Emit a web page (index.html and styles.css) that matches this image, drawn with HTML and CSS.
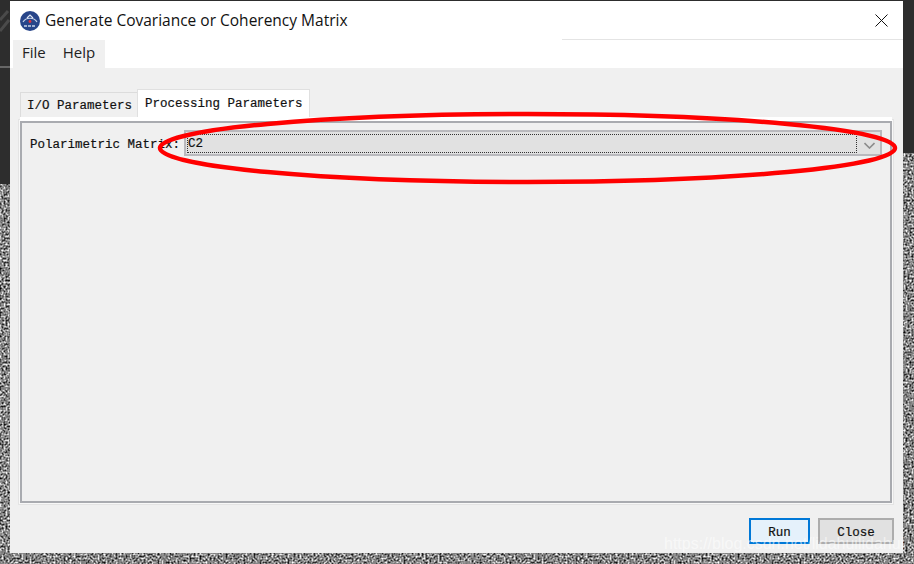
FILE: index.html
```html
<!DOCTYPE html>
<html lang="en">
<head>
<meta charset="utf-8">
<title>Generate Covariance or Coherency Matrix</title>
<link rel="stylesheet" href="styles.css">
</head>
<body>
<svg class="noise" width="914" height="564" aria-hidden="true">
  <filter id="grain" x="0" y="0" width="100%" height="100%" color-interpolation-filters="sRGB">
    <feTurbulence type="fractalNoise" baseFrequency="0.5" numOctaves="2" seed="4"/>
    <feColorMatrix type="matrix" values="1.7 0 0 0 -0.33  1.7 0 0 0 -0.33  1.7 0 0 0 -0.33  0 0 0 0 1"/>
  </filter>
  <rect width="914" height="564" filter="url(#grain)"/>
</svg>
<div class="dark"></div>
<div class="dark-left"></div>
<svg class="dark-marks" width="10" height="70" viewBox="0 0 10 70" aria-hidden="true">
  <path d="M0 20 L8 11 M0 31 L9 20" stroke="#4a4a4a" stroke-width="3" fill="none"/>
  <path d="M0 67 H10" stroke="#666" stroke-width="2" fill="none"/>
</svg>
<main class="window">
  <header class="titlebar">
    <svg class="app-icon" width="20" height="20" viewBox="0 0 20 20" aria-hidden="true">
      <circle cx="10" cy="10" r="10" fill="#27458a"/>
      <path d="M3 11 C6 6 14 6 17 11" fill="none" stroke="#c9d4ea" stroke-width="1.2"/>
      <path d="M7 7 L10 4 L13 7" fill="none" stroke="#dfe6f3" stroke-width="1.2"/>
      <circle cx="10" cy="10.5" r="1.4" fill="#e0323c"/>
      <path d="M4 15 H16" stroke="#c9d4ea" stroke-width="1.6" stroke-dasharray="3 1"/>
    </svg>
    <h1 class="title">Generate Covariance or Coherency Matrix</h1>
    <svg class="close-x" width="13" height="13" viewBox="0 0 13 13" aria-hidden="true">
      <path d="M.5 .5 L12.5 12.5 M12.5 .5 L.5 12.5" stroke="#111" stroke-width="1" fill="none"/>
    </svg>
  </header>
  <div class="menubar-row">
    <nav class="menubar"><span>File</span><span>Help</span></nav>
  </div>
  <div class="content">
    <div class="tabs">
      <div class="tab">I/O Parameters</div>
      <div class="tab active">Processing Parameters</div>
    </div>
    <section class="panel">
      <div class="field">
        <label class="field-label">Polarimetric Matrix:</label>
        <div class="combo">
          <div class="combo-value">C2</div>
          <svg class="chevron" width="11" height="7" viewBox="0 0 11 7" aria-hidden="true">
            <path d="M.5 1 L5.5 6 L10.5 1" fill="none" stroke="#8c8c8c" stroke-width="1.6"/>
          </svg>
        </div>
      </div>
    </section>
    <footer class="actions">
      <button class="btn primary">Run</button>
      <button class="btn">Close</button>
    </footer>
  </div>
</main>
<svg class="annotation" width="914" height="564" viewBox="0 0 914 564" aria-hidden="true">
  <ellipse cx="527.5" cy="148" rx="367.5" ry="34" fill="none" stroke="#f00" stroke-width="4.5"/>
</svg>
<div class="watermark">https://blog.csdn.net/lidahuilidahui</div>
</body>
</html>
```
FILE: styles.css
```css
* { box-sizing: border-box; }
html, body { margin: 0; padding: 0; }
body {
  width: 914px;
  height: 564px;
  position: relative;
  overflow: hidden;
  background: #777;
  font-family: "Liberation Mono", monospace;
  color: #111;
}
.noise { position: absolute; left: 0; top: 0; }
.dark { position: absolute; left: 0; top: 0; width: 914px; height: 153px; background: #2d2d2d; }
.dark-left { position: absolute; left: 0; top: 0; width: 10px; height: 184px; background: #2d2d2d; }
.dark-marks { position: absolute; left: 0; top: 0; }
.window {
  position: absolute;
  left: 10px;
  top: 1px;
  width: 893px;
  height: 552px;
  display: flex;
  flex-direction: column;
  background: #f0f0f0;
}
.titlebar {
  height: 39px;
  flex: none;
  display: flex;
  align-items: center;
  padding: 0 15px 0 10px;
  background: #fff;
}
.app-icon { flex: none; }
.title {
  margin: 0 0 2px 5px;
  flex: 1;
  font: 400 15.5px "Open Sans", "Noto Sans", sans-serif;
  color: #111;
}
.close-x { flex: none; }
.menubar-row {
  height: 28px;
  flex: none;
  background: #fff;
  display: flex;
  position: relative;
}
.menubar-row::after {
  content: "";
  position: absolute;
  left: 552px;
  right: 0;
  top: -1px;
  height: 1px;
  background: #e4e4e4;
}
.menubar {
  margin-left: 3px;
  width: 92px;
  display: flex;
  gap: 17px;
  padding: 2px 0 0 9px;
  background: #f0f0f0;
  font: 400 15px "Open Sans", "Noto Sans", sans-serif;
  color: #222;
}
.content {
  flex: 1;
  display: flex;
  flex-direction: column;
  padding: 21px 11px 9px 10px;
  min-height: 0;
}
.tabs { display: flex; height: 28px; flex: none; align-items: flex-end; }
.tab {
  width: 118px;
  height: 25px;
  padding: 6px 0 0 6px;
  font-size: 12.5px;
  line-height: 14px;
  -webkit-text-stroke: .2px #111;
  background: #f0f0f0;
  border: 1px solid #dcdcdc;
  border-bottom: 0;
  white-space: nowrap;
}
.tab.active {
  height: 28px;
  padding: 7px 0 0 7px;
  width: 173px;
  background: #fff;
  margin-left: -1px;
  border-color: #e0e0e0;
}
.panel {
  flex: 1;
  border: 2px solid #a9abb0;
  box-shadow: 0 -4px 0 0 #fff, 0 0 0 1px #f8f8f8, 0 0 0 2px #e4e4e4;
  padding: 7px 8px 0 8px;
  margin-top: 4px;
  min-height: 0;
}
.field { display: flex; align-items: center; height: 26px; }
.field-label {
  width: 154px;
  flex: none;
  padding-top: 4px;
  font-size: 12.5px;
  line-height: 14px;
  -webkit-text-stroke: .2px #111;
  white-space: nowrap;
}
.combo {
  flex: 1;
  height: 26px;
  display: flex;
  align-items: center;
  background: #e1e1e1;
  border: 2px solid #b9b9bd;
  padding: 0 0 0 1px;
}
.combo-value {
  flex: 1;
  height: 19px;
  border: 1px dotted #333;
  padding-top: 2px;
  font-size: 12.5px;
  line-height: 15px;
  -webkit-text-stroke: .2px #111;
}
.chevron { flex: none; margin: 4px 5px 0 7px; }
.actions {
  flex: none;
  display: flex;
  justify-content: flex-end;
  gap: 8px;
  padding-top: 15px;
  margin-right: -2px;
}
.btn {
  width: 76px;
  height: 26px;
  padding: 4px 0 0;
  background: #e1e1e1;
  border: 2px solid #adadad;
  font: 12.5px "Liberation Mono", monospace;
  -webkit-text-stroke: .2px #111;
  color: #111;
}
.btn.primary {
  width: 61px;
  background: #e5f1fb;
  border-color: #0078d7;
}
.annotation { position: absolute; left: 0; top: 0; }
.watermark {
  position: absolute;
  left: 664px;
  top: 535px;
  font: 16px "Liberation Sans", sans-serif;
  color: rgba(255, 255, 255, .55);
  white-space: nowrap;
}
```
